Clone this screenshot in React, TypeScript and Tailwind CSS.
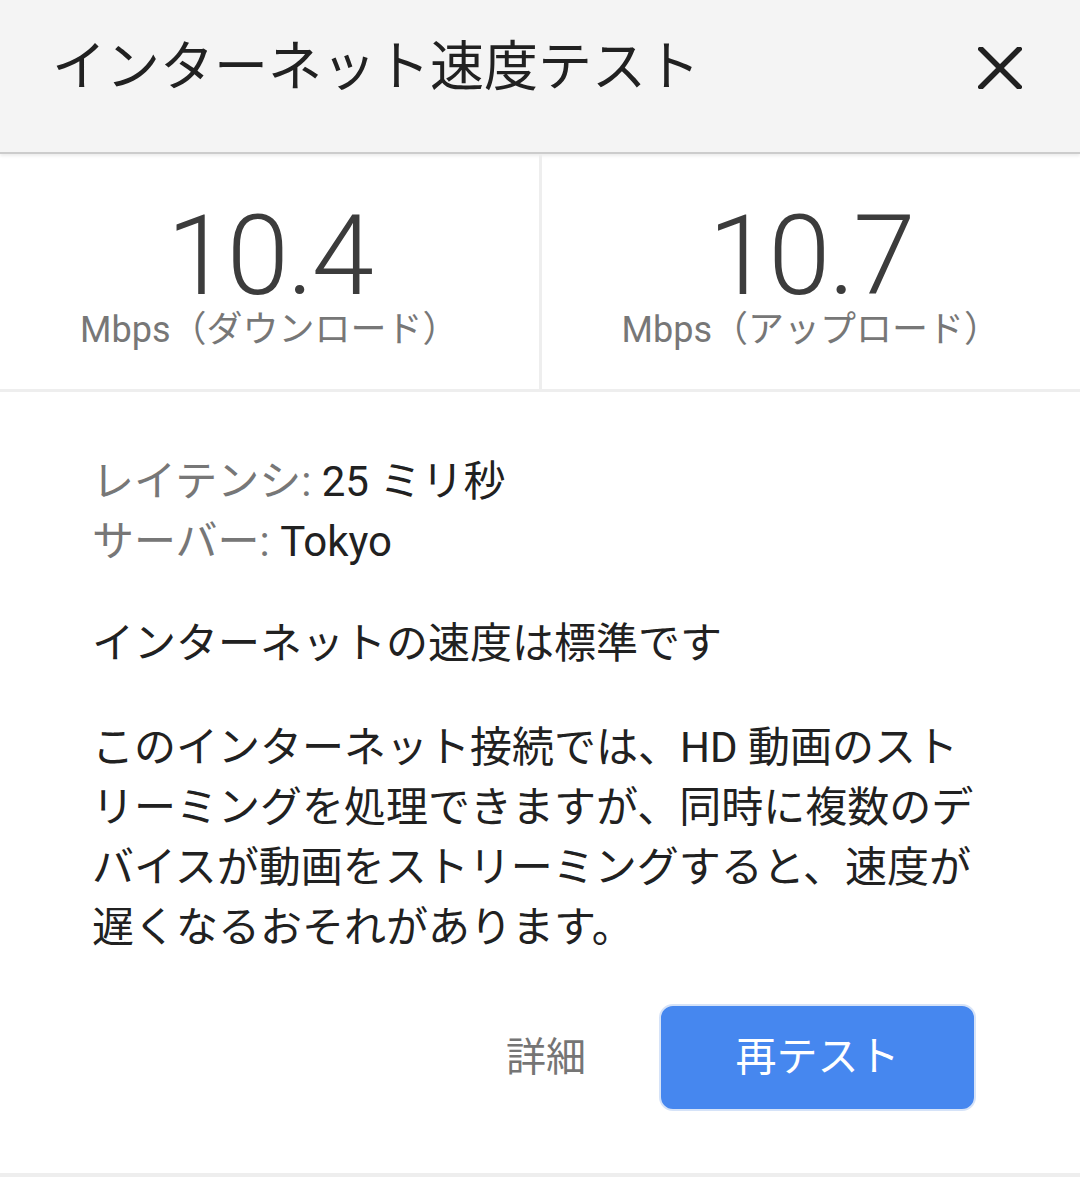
import React from 'react';

const font = { fontFamily: "Roboto, 'Noto Sans CJK JP', sans-serif" };

const Stat: React.FC<{ value: string; label: string }> = ({ value, label }) => (
  <div className="flex-1 flex flex-col items-center pt-[52px]">
    <div className="text-[112px] leading-[100px] font-light text-[#3c3c3c] tracking-[-2px]">{value}</div>
    <div className="text-[36px] leading-[40px] text-[#777777] mt-[4px]">{label}</div>
  </div>
);

const App: React.FC = () => {
  return (
    <div className="w-[1080px] h-[1177px] bg-white overflow-hidden flex flex-col" style={font}>
      {/* header */}
      <div className="h-[154px] bg-[#f4f4f4] flex items-center justify-between pl-[52px] pr-[58px] pb-[16px] border-b-[2px] border-[#cccccc] shadow-[0_2px_3px_rgba(0,0,0,0.08)]">
        <h1 className="text-[54px] leading-none text-[#212121] font-normal">インターネット速度テスト</h1>
        <button className="w-[44px] h-[44px] flex items-center justify-center">
          <svg width="44" height="42" viewBox="0 0 44 42">
            <path d="M3 2 L41 40 M41 2 L3 40" stroke="#212121" strokeWidth="5.5" strokeLinecap="square" />
          </svg>
        </button>
      </div>

      {/* results */}
      <div className="flex h-[238px] border-b-[3px] border-[#eeeeee]">
        <Stat value="10.4" label="Mbps（ダウンロード）" />
        <div className="w-[3px] bg-[#eeeeee]" />
        <Stat value="10.7" label="Mbps（アップロード）" />
      </div>

      {/* details */}
      <div className="flex-1 flex flex-col pl-[92px] pr-[104px] pt-[60px] text-[42px] leading-[60px] text-[#212121]">
        <div>
          <span className="text-[#777777]">レイテンシ:</span> 25 ミリ秒
        </div>
        <div>
          <span className="text-[#777777]">サーバー:</span> Tokyo
        </div>
        <p className="mt-[42px]">インターネットの速度は標準です</p>
        <p className="mt-[44px] w-[890px]">
          このインターネット接続では、HD 動画のストリーミングを処理できますが、同時に複数のデバイスが動画をストリーミングすると、速度が遅くなるおそれがあります。
        </p>

        <div className="flex items-center justify-end mt-[46px] gap-[73px]">
          <button className="text-[40px] leading-none text-[#757575]">詳細</button>
          <button className="w-[317px] h-[107px] rounded-[14px] bg-[#4687ef] border-[2px] border-[#d6e3f8] text-white text-[41px] leading-none">
            再テスト
          </button>
        </div>
      </div>

      <div className="h-[4px] bg-[#eeeeee]" />
    </div>
  );
};

export default App;
